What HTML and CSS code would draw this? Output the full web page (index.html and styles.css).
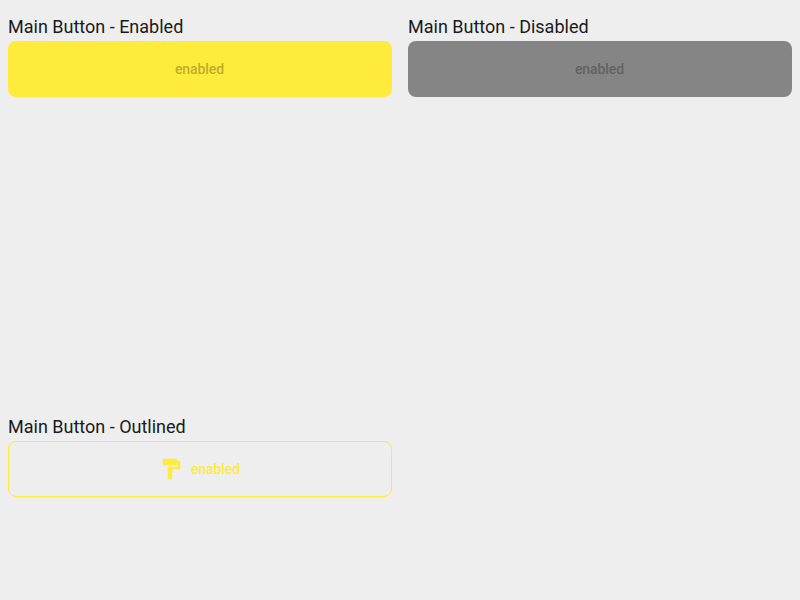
FILE: index.html
```html
<!DOCTYPE html>
<html lang="en">
<head>
<meta charset="utf-8">
<title>Main Button</title>
<link rel="stylesheet" href="styles.css">
</head>
<body>
<main class="grid">
  <section class="cell">
    <h2 class="title">Main Button - Enabled</h2>
    <button class="button button-filled">enabled</button>
  </section>
  <section class="cell">
    <h2 class="title">Main Button - Disabled</h2>
    <button class="button button-disabled" disabled>enabled</button>
  </section>
  <section class="cell">
    <h2 class="title">Main Button - Outlined</h2>
    <button class="button button-outlined">
      <svg class="icon" viewBox="0 0 24 24" aria-hidden="true"><path fill="currentColor" stroke="currentColor" stroke-width=".5" d="M18 4V3c0-.55-.45-1-1-1H5c-.55 0-1 .45-1 1v4c0 .55.45 1 1 1h12c.55 0 1-.45 1-1V6h1v4H9v11c0 .55.45 1 1 1h2c.55 0 1-.45 1-1v-9h8V4h-3z"/></svg>
      <span>enabled</span>
    </button>
  </section>
</main>
</body>
</html>
```

FILE: styles.css
```css
body {
  margin: 0;
  background: #eeeeee;
  color: #1a1a1a;
  font-family: Roboto, sans-serif;
}

.grid {
  display: grid;
  grid-template-columns: 400px 400px;
  grid-template-rows: 400px 200px;
}

.cell {
  padding: 16px 8px 0;
}

.title {
  margin: 0 0 4px;
  font-size: 18px;
  font-weight: 400;
  line-height: 21px;
}

.button {
  display: flex;
  box-sizing: border-box;
  width: 100%;
  height: 56px;
  padding: 0 1px 0 0;
  align-items: center;
  justify-content: center;
  gap: 8px;
  border: 0;
  border-radius: 8px;
  font: 500 14px/20px Roboto, sans-serif;
  letter-spacing: -0.06px;
}

.button-filled {
  background: #ffeb3b;
  color: #bdae2c;
}

.button-disabled {
  background: #858585;
  color: #626262;
}

.button-outlined {
  border: 1px solid #ffeb3b;
  background: transparent;
  color: #ffeb3b;
}

.icon {
  width: 24px;
  height: 24px;
}
```
